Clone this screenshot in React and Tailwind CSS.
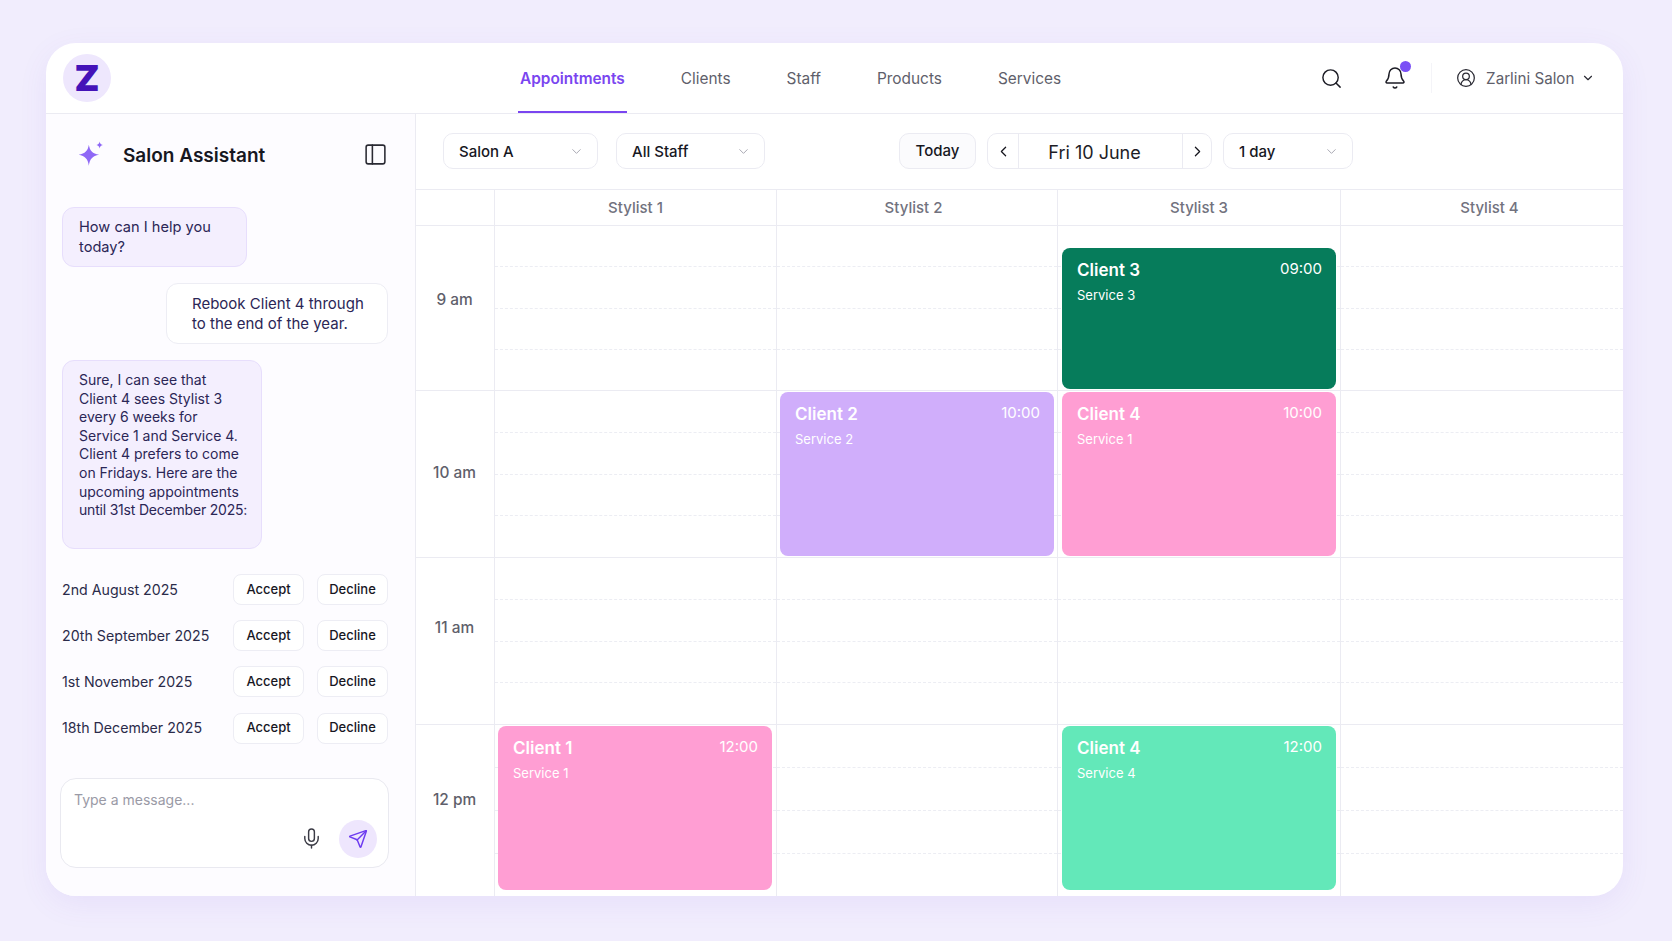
import { Search, Bell, CircleUserRound, ChevronDown, ChevronLeft, ChevronRight, Mic, Send, PanelLeft } from "lucide-react";

const tabs = ["Clients", "Staff", "Products", "Services"];

const dates = ["2nd August 2025", "20th September 2025", "1st November 2025", "18th December 2025"];

const answer = [
  "Sure, I can see that",
  "Client 4 sees Stylist 3",
  "every 6 weeks for",
  "Service 1 and Service 4.",
  "Client 4 prefers to come",
  "on Fridays. Here are the",
  "upcoming appointments",
  "until 31st December 2025:",
];

const stylists = [
  { name: "Stylist 1", cls: "" },
  { name: "Stylist 2", cls: "pr-[7px]" },
  { name: "Stylist 3", cls: "" },
  { name: "Stylist 4", cls: "pl-[15px]" },
];

const events = {
  "0-2": { client: "Client 3", service: "Service 3", time: "09:00", cls: "top-[22px] bottom-[1px] left-[4px] right-[4px] bg-[#067c5b]" },
  "1-1": { client: "Client 2", service: "Service 2", time: "10:00", cls: "top-[1px] bottom-[1px] left-[3px] right-[3px] bg-[#d0aefb]" },
  "1-2": { client: "Client 4", service: "Service 1", time: "10:00", cls: "top-[1px] bottom-[1px] left-[4px] right-[4px] bg-[#ff9ed3]" },
  "3-0": { client: "Client 1", service: "Service 1", time: "12:00", cls: "top-[1px] bottom-[6px] left-[3px] right-[4px] bg-[#ff9ed3]" },
  "3-2": { client: "Client 4", service: "Service 4", time: "12:00", cls: "top-[1px] bottom-[6px] left-[4px] right-[4px] bg-[#63e8b9]" },
};

const hours = [
  { label: "9 am", rowCls: "h-[165px]", labelCls: "pt-[62px]" },
  { label: "10 am", rowCls: "h-[167px]", labelCls: "pt-[70px]" },
  { label: "11 am", rowCls: "h-[167px]", labelCls: "pt-[58px]" },
  { label: "12 pm", rowCls: "h-[171px]", labelCls: "pt-[63px]" },
];

const Sparkle = () => (
  <svg width="28" height="28" viewBox="0 0 26 26" fill="#8f68f6">
    <path d="M11 3.5c.9 5.6 3.3 8.2 9.5 9.3-6.2 1.2-8.6 3.8-9.5 10.2-.9-6.4-3.4-9-9.5-10.2 6.1-1.1 8.6-3.7 9.5-9.3z" />
    <path d="M21 .5c.3 1.9 1 2.8 3 3.1-2 .4-2.7 1.3-3 3.4-.3-2.1-1-3-3-3.4 2-.3 2.7-1.2 3-3.1z" />
  </svg>
);

const Select = ({ label, className }) => (
  <div className={`flex h-[36px] items-center justify-between rounded-[10px] border border-[#ebebf2] bg-white pl-[15px] pr-[13px] text-[15px] font-medium text-[#17171f] ${className}`}>
    <span className="pt-[2px]">{label}</span>
    <ChevronDown size={15} strokeWidth={1.5} className="text-[#a3a3ae]" />
  </div>
);

const Bubble = ({ className, children }) => (
  <div className={`rounded-[12px] border text-[#2b2656] ${className}`}>{children}</div>
);

const Sidebar = () => (
  <aside className="flex w-[370px] shrink-0 flex-col border-r border-[#ebebf2] bg-[#fdfcff] pl-[16px] pr-[27px] pt-[27px]">
    <div className="flex h-[28px] items-center justify-between">
      <div className="flex items-center">
        <div className="ml-[15px] mr-[18px]"><Sparkle /></div>
        <h2 className="pt-[2px] text-[19px] font-semibold text-[#17171f]">Salon Assistant</h2>
      </div>
      <PanelLeft size={25} strokeWidth={1.5} className="-mt-[2px] text-[#2a2a33]" />
    </div>

    <Bubble className="mt-[38px] h-[60px] w-[185px] border-[#e7defc] bg-[#f4effe] px-[16px] pt-[9px] text-[14.6px] leading-[20px]">
      How can I help you today?
    </Bubble>
    <Bubble className="ml-auto mt-[16px] h-[61px] w-[222px] border-[#ededf4] bg-white pl-[25px] pr-[18px] pt-[10px] text-[15px] leading-[20px]">
      Rebook Client 4 through to the end of the year.
    </Bubble>
    <Bubble className="mt-[16px] h-[189px] w-[200px] whitespace-nowrap border-[#e7defc] bg-[#f4effe] pl-[16px] pt-[10px] text-[14px] leading-[18.6px]">
      {answer.map((line) => (
        <div key={line} className="last:tracking-[-0.2px]">{line}</div>
      ))}
    </Bubble>

    <div className="mt-[25px] flex flex-col gap-[15.2px]">
      {dates.map((d) => (
        <div key={d} className="flex h-[31px] items-center">
          <span className="flex-1 text-[14.2px] text-[#2b2b4a]">{d}</span>
          <button className="h-[31px] w-[71px] rounded-[8px] border border-[#ededf4] bg-white text-[13px] font-medium text-[#17171f]">Accept</button>
          <button className="ml-[13px] h-[31px] w-[71px] rounded-[8px] border border-[#ededf4] bg-white text-[13px] font-medium text-[#17171f]">Decline</button>
        </div>
      ))}
    </div>

    <div className="-ml-[2px] mt-[34px] flex h-[90px] w-[329px] flex-col rounded-[16px] border border-[#e9e9f0] bg-white pl-[13px] pr-[11px] pt-[11px]">
      <span className="text-[14px] leading-[20px] text-[#9a9aa6]">Type a message...</span>
      <div className="mt-[10px] flex items-center justify-end">
        <Mic size={23} strokeWidth={1.5} className="text-[#3b3b45]" />
        <div className="ml-[16px] flex h-[38px] w-[38px] items-center justify-center rounded-full bg-[#eee6fd]">
          <Send size={20} strokeWidth={1.75} className="text-[#6d3bf0]" />
        </div>
      </div>
    </div>
  </aside>
);

const Toolbar = () => (
  <div className="flex h-[76px] items-start border-b border-[#ebebf2] pl-[27px] pt-[19px]">
    <Select label="Salon A" className="w-[155px]" />
    <Select label="All Staff" className="ml-[18px] w-[149px]" />
    <button className="ml-[134px] h-[36px] w-[77px] rounded-[10px] border border-[#ebebf2] bg-[#fbfbfd] text-[15px] font-medium text-[#17171f]">Today</button>
    <div className="ml-[11px] flex h-[36px] w-[225px] items-center rounded-[10px] border border-[#ebebf2] bg-white">
      <div className="flex h-full w-[31px] items-center justify-center border-r border-[#ebebf2]">
        <ChevronLeft size={17} strokeWidth={1.75} className="text-[#17171f]" />
      </div>
      <div className="flex-1 pr-[12px] pt-[2px] text-center text-[18px] text-[#1d1d26]">Fri 10 June</div>
      <div className="flex h-full w-[29px] items-center justify-center border-l border-[#ebebf2]">
        <ChevronRight size={17} strokeWidth={1.75} className="text-[#17171f]" />
      </div>
    </div>
    <Select label="1 day" className="ml-[11px] w-[130px]" />
  </div>
);

const EventCard = ({ ev }) => (
  <div className={`absolute flex flex-col rounded-[8px] pl-[15px] pr-[14px] pt-[10px] text-white ${ev.cls}`}>
    <div className="flex items-start justify-between">
      <span className="text-[17px] font-semibold leading-[24px]">{ev.client}</span>
      <span className="text-[15px] leading-[22px]">{ev.time}</span>
    </div>
    <span className="mt-[3px] text-[13px] leading-[20px]">{ev.service}</span>
  </div>
);

const Calendar = () => (
  <div className="flex flex-col">
    <div className="grid h-[36px] grid-cols-[79px_282px_281px_283px_282px] border-b border-[#ebebf2]">
      <div className="border-r border-[#ebebf2]" />
      {stylists.map((s, i) => (
        <div key={s.name} className={`flex items-center justify-center pt-[1px] text-[15px] font-medium text-[#72727e] ${s.cls} ${i < 3 ? "border-r border-[#ebebf2]" : ""}`}>
          {s.name}
        </div>
      ))}
    </div>
    {hours.map((h, r) => (
      <div key={h.label} className={`grid grid-cols-[79px_282px_281px_283px_282px] ${h.rowCls} ${r < 3 ? "border-b border-[#ebebf2]" : ""}`}>
        <div className={`border-r border-[#ebebf2] pr-[1px] text-center text-[15.4px] font-medium leading-[24px] text-[#5f5f6b] ${h.labelCls}`}>{h.label}</div>
        {stylists.map((s, c) => (
          <div key={s.name} className={`relative flex flex-col ${c < 3 ? "border-r border-[#ebebf2]" : ""}`}>
            <div className="flex-1 border-b border-dashed border-[#ecedf3]" />
            <div className="flex-1 border-b border-dashed border-[#ecedf3]" />
            <div className="flex-1 border-b border-dashed border-[#ecedf3]" />
            <div className="flex-1" />
            {events[`${r}-${c}`] && <EventCard ev={events[`${r}-${c}`]} />}
          </div>
        ))}
      </div>
    ))}
  </div>
);

export default function App() {
  return (
    <div className="min-h-screen bg-[#f1edfd] pb-[45px] pl-[46px] pt-[43px] font-['Inter',sans-serif]">
      <div className="flex h-[853px] w-[1577px] flex-col overflow-hidden rounded-[30px] bg-white shadow-[0_8px_30px_rgba(110,80,220,0.08)]">
        <header className="flex h-[71px] shrink-0 items-center border-b border-[#ebebf2] pl-[17px]">
          <div className="flex h-[48px] w-[48px] items-center justify-center rounded-full bg-[#eee7fd] text-[36px] font-black leading-none text-[#4413b8]">Z</div>
          <nav className="ml-[407px] flex h-full gap-[52px]">
            <div className="flex h-[70px] items-center border-b-2 border-[#7a45f0] px-[2px] pt-[3px] text-[15.4px] font-semibold text-[#7a45f0]">Appointments</div>
            {tabs.map((t) => (
              <div key={t} className="flex items-center px-[2px] pt-[1px] text-[15.4px] text-[#5f5f6b]">{t}</div>
            ))}
          </nav>
          <Search size={23} strokeWidth={1.5} className="ml-[257px] text-[#1d1d26]" />
          <div className="relative ml-[40px]">
            <Bell size={24} strokeWidth={1.5} className="text-[#1d1d26]" />
            <span className="absolute -right-[4px] -top-[5px] h-[11px] w-[11px] rounded-full bg-[#7a50f5]" />
          </div>
          <div className="ml-[24px] h-[30px] w-px bg-[#f4f4f8]" />
          <CircleUserRound size={20} strokeWidth={1.5} className="ml-[24px] text-[#2a2a33]" />
          <span className="ml-[10px] pt-[2px] text-[15.2px] text-[#5f5f6b]">Zarlini Salon</span>
          <ChevronDown size={14} strokeWidth={2} className="ml-[7px] text-[#2a2a33]" />
        </header>
        <div className="flex flex-1">
          <Sidebar />
          <main className="flex-1">
            <Toolbar />
            <Calendar />
          </main>
        </div>
      </div>
    </div>
  );
}
